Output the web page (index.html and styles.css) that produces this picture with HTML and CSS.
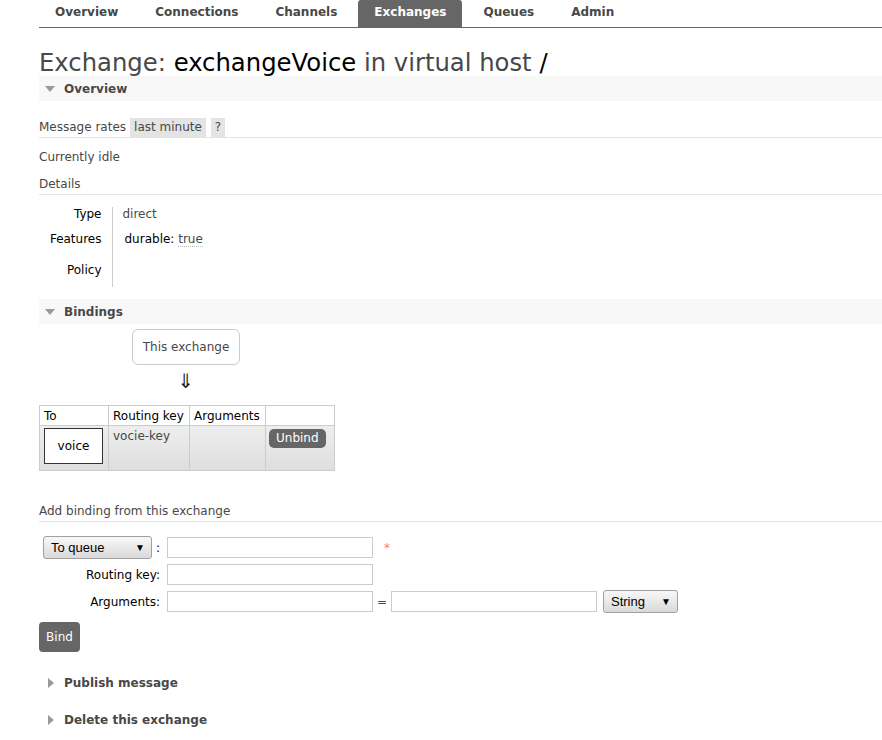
FILE: index.html
```html
<!DOCTYPE html>
<html lang="en">
<head>
<meta charset="utf-8">
<title>RabbitMQ Management</title>
<link rel="stylesheet" href="styles.css">
</head>
<body>
<div class="nav">
  <ul class="tabs">
    <li class="tab">Overview</li>
    <li class="tab">Connections</li>
    <li class="tab">Channels</li>
    <li class="tab active">Exchanges</li>
    <li class="tab">Queues</li>
    <li class="tab">Admin</li>
  </ul>
</div>
<div class="main">
  <h1>Exchange: <b>exchangeVoice</b> in virtual host <b>/</b></h1>

  <section class="section">
    <h2 class="band"><span class="tri-box"><span class="tri-down"></span></span>Overview</h2>
    <div class="rates">Message rates <span class="pill">last minute</span> <span class="pill">?</span></div>
    <p class="idle">Currently idle</p>
    <h3 class="subhead">Details</h3>
    <table class="facts">
      <tr class="r1"><th>Type</th><td>direct</td></tr>
      <tr class="r2"><th>Features</th><td><span class="feat"><span class="key">durable:</span> <span class="val">true</span></span></td></tr>
      <tr class="r3"><th>Policy</th><td></td></tr>
    </table>
  </section>

  <section class="section">
    <h2 class="band band2"><span class="tri-box"><span class="tri-down"></span></span>Bindings</h2>
    <div class="diagram">
      <div class="this-box">This exchange</div>
      <div class="arrow">⇓</div>
    </div>
    <table class="bindings">
      <thead>
        <tr><th class="c1">To</th><th class="c2">Routing key</th><th class="c3">Arguments</th><th class="c4"></th></tr>
      </thead>
      <tbody>
        <tr>
          <td class="c1"><div class="dest">voice</div></td>
          <td class="c2">vocie-key</td>
          <td class="c3"></td>
          <td class="c4"><span class="unbind">Unbind</span></td>
        </tr>
      </tbody>
    </table>

    <h3 class="subhead add-head">Add binding from this exchange</h3>
    <div class="form">
      <div class="frow row1">
        <div class="lab"><span class="select sel-dest"><span>To queue</span><span class="caret">▼</span></span><span class="colon">:</span></div>
        <span class="input"></span>
        <span class="req">*</span>
      </div>
      <div class="frow row2">
        <div class="lab">Routing key:</div>
        <span class="input"></span>
      </div>
      <div class="frow row3">
        <div class="lab">Arguments:</div>
        <span class="input"></span>
        <span class="eq">=</span>
        <span class="input"></span>
        <span class="select sel-type"><span>String</span><span class="caret">▼</span></span>
      </div>
    </div>
    <div class="bind">Bind</div>
  </section>

  <section class="section">
    <h2 class="band closed first-closed"><span class="tri-box"><span class="tri-right"></span></span>Publish message</h2>
  </section>
  <section class="section">
    <h2 class="band closed second-closed"><span class="tri-box"><span class="tri-right"></span></span>Delete this exchange</h2>
  </section>
</div>
</body>
</html>
```

FILE: styles.css
```css
* { box-sizing: border-box; }

body {
  margin: 0;
  font-family: "DejaVu Sans", Verdana, sans-serif;
  font-size: 12px;
  color: #484848;
  background: #fff;
}

/* navigation */
.nav {
  margin-left: 39px;
  border-bottom: 1px solid #666;
}
.tabs {
  list-style: none;
  margin: 0;
  padding: 0;
  display: flex;
  gap: 5px;
}
.tab {
  height: 27px;
  line-height: 25px;
  padding: 0 16px;
  font-weight: bold;
  color: #484848;
  border-radius: 3px 3px 0 0;
}
.tab.active {
  background: #666;
  color: #fff;
}

.main {
  padding-left: 39px;
}

h1 {
  margin: 21px 0 0;
  font-size: 24.3px;
  font-weight: normal;
  line-height: 27px;
  color: #484848;
}
h1 b {
  font-weight: normal;
  color: #000;
}

/* section header bands */
.band {
  margin: 0;
  height: 25px;
  background: #f8f8f8;
  display: flex;
  align-items: center;
  font-size: 12px;
  font-weight: bold;
  color: #484848;
}
.band2 { margin-top: 12px; }
.band.closed { background: transparent; }
.first-closed { margin-top: 18px; }
.second-closed { margin-top: 12px; }

.tri-box {
  width: 25px;
  flex: none;
  display: flex;
  align-items: center;
}
.tri-down {
  margin-left: 6px;
  width: 0;
  height: 0;
  border-left: 5.5px solid transparent;
  border-right: 5.5px solid transparent;
  border-top: 6px solid #999;
}
.tri-right {
  margin-left: 9px;
  width: 0;
  height: 0;
  border-top: 5px solid transparent;
  border-bottom: 5px solid transparent;
  border-left: 6px solid #999;
}

/* overview */
.rates {
  margin-top: 17px;
  height: 20px;
  line-height: 19px;
  border-bottom: 1px solid #e4e4e4;
  display: flex;
  gap: 4px;
  align-items: flex-start;
}
.pill {
  display: inline-block;
  height: 19px;
  line-height: 19px;
  padding: 0 4px;
  background: #e4e4e4;
}
.pill + .pill { margin-left: 1px; }

.idle {
  margin: 12px 0 0;
  line-height: 14px;
}
.subhead {
  margin: 13px 0 0;
  font-size: 12px;
  font-weight: normal;
  line-height: 14px;
  padding-bottom: 3px;
  border-bottom: 1px solid #e4e4e4;
  color: #484848;
}

.facts {
  margin-top: 12px;
  border-collapse: collapse;
}
.facts th {
  width: 73px;
  padding: 0 10px 0 0;
  text-align: right;
  font-weight: normal;
  color: #000;
  vertical-align: top;
  line-height: 14px;
}
.facts td {
  border-left: 1px solid #ccc;
  padding: 0 0 0 10px;
  vertical-align: top;
  line-height: 14px;
}
.facts .r1 { height: 25px; }
.facts .r2 { height: 31px; }
.facts .r3 { height: 24px; }
.feat { padding-left: 2px; }
.key { color: #000; }
.val { border-bottom: 1px dotted #bbb; }

/* bindings diagram */
.diagram {
  margin-left: 93px;
  width: 108px;
  margin-top: 5px;
}
.this-box {
  height: 36px;
  border: 1px solid #ccc;
  border-radius: 6px;
  display: flex;
  align-items: center;
  justify-content: center;
  color: #484848;
}
.arrow {
  margin-top: 6px;
  text-align: center;
  font-size: 20px;
  line-height: 20px;
  color: #222;
}

.bindings {
  margin-top: 14px;
  border-collapse: collapse;
  table-layout: fixed;
  width: 295px;
}
.bindings th, .bindings td {
  border: 1px solid #ccc;
  white-space: nowrap;
}
.bindings th {
  height: 20px;
  padding: 0 4px;
  text-align: left;
  font-weight: normal;
  color: #000;
  background: #fff;
}
.bindings .c1 { width: 69px; }
.bindings .c2 { width: 81px; }
.bindings .c3 { width: 76px; }
.bindings .c4 { width: 69px; }
.bindings tbody tr {
  height: 45px;
  background: linear-gradient(#eeeeee, #dedede);
}
.bindings td {
  vertical-align: top;
  padding: 3px 4px;
  line-height: 14px;
}
.bindings td.c1 { padding: 2px 4px; }
.bindings td.c4 { padding: 3px 3px; }
.dest {
  width: 59px;
  height: 36px;
  background: #fff;
  border: 1px solid #333;
  color: #000;
  display: flex;
  align-items: center;
  justify-content: center;
}
.unbind {
  display: inline-block;
  height: 19px;
  line-height: 19px;
  padding: 0 7px;
  background: #666;
  color: #fff;
  border-radius: 5px;
}

.add-head { margin-top: 33px; }

/* form */
.form {
  margin-top: 14px;
  display: flex;
  flex-direction: column;
  gap: 5px;
}
.frow {
  display: flex;
  align-items: center;
}
.row1, .row3 { height: 23px; }
.row2 { height: 21px; }
.lab {
  width: 121px;
  margin-right: 7px;
  display: flex;
  align-items: center;
  justify-content: flex-end;
  color: #000;
}
.row1 .lab { justify-content: flex-start; }
.colon { margin-left: 4px; }
.select {
  height: 23px;
  border: 1px solid #a0a0a0;
  border-radius: 3px;
  background: linear-gradient(#f8f8f8, #dadada);
  font-family: "Liberation Sans", Arial, sans-serif;
  font-size: 13px;
  color: #000;
  display: flex;
  align-items: center;
  justify-content: space-between;
  padding: 0 6px 0 7px;
}
.caret { font-size: 10px; }
.sel-dest { width: 109px; margin-left: 4px; }
.sel-type { width: 75px; margin-left: 6px; }
.input {
  display: inline-block;
  width: 206px;
  height: 21px;
  border: 1px solid #ccc;
  background: #fff;
}
.req {
  margin-left: 11px;
  color: #f77;
  font-size: 12px;
}
.eq {
  width: 18px;
  text-align: center;
  color: #484848;
}

.bind {
  margin-top: 9px;
  width: 41px;
  height: 30px;
  line-height: 30px;
  text-align: center;
  background: #666;
  color: #fff;
  border-radius: 4px;
}
```
